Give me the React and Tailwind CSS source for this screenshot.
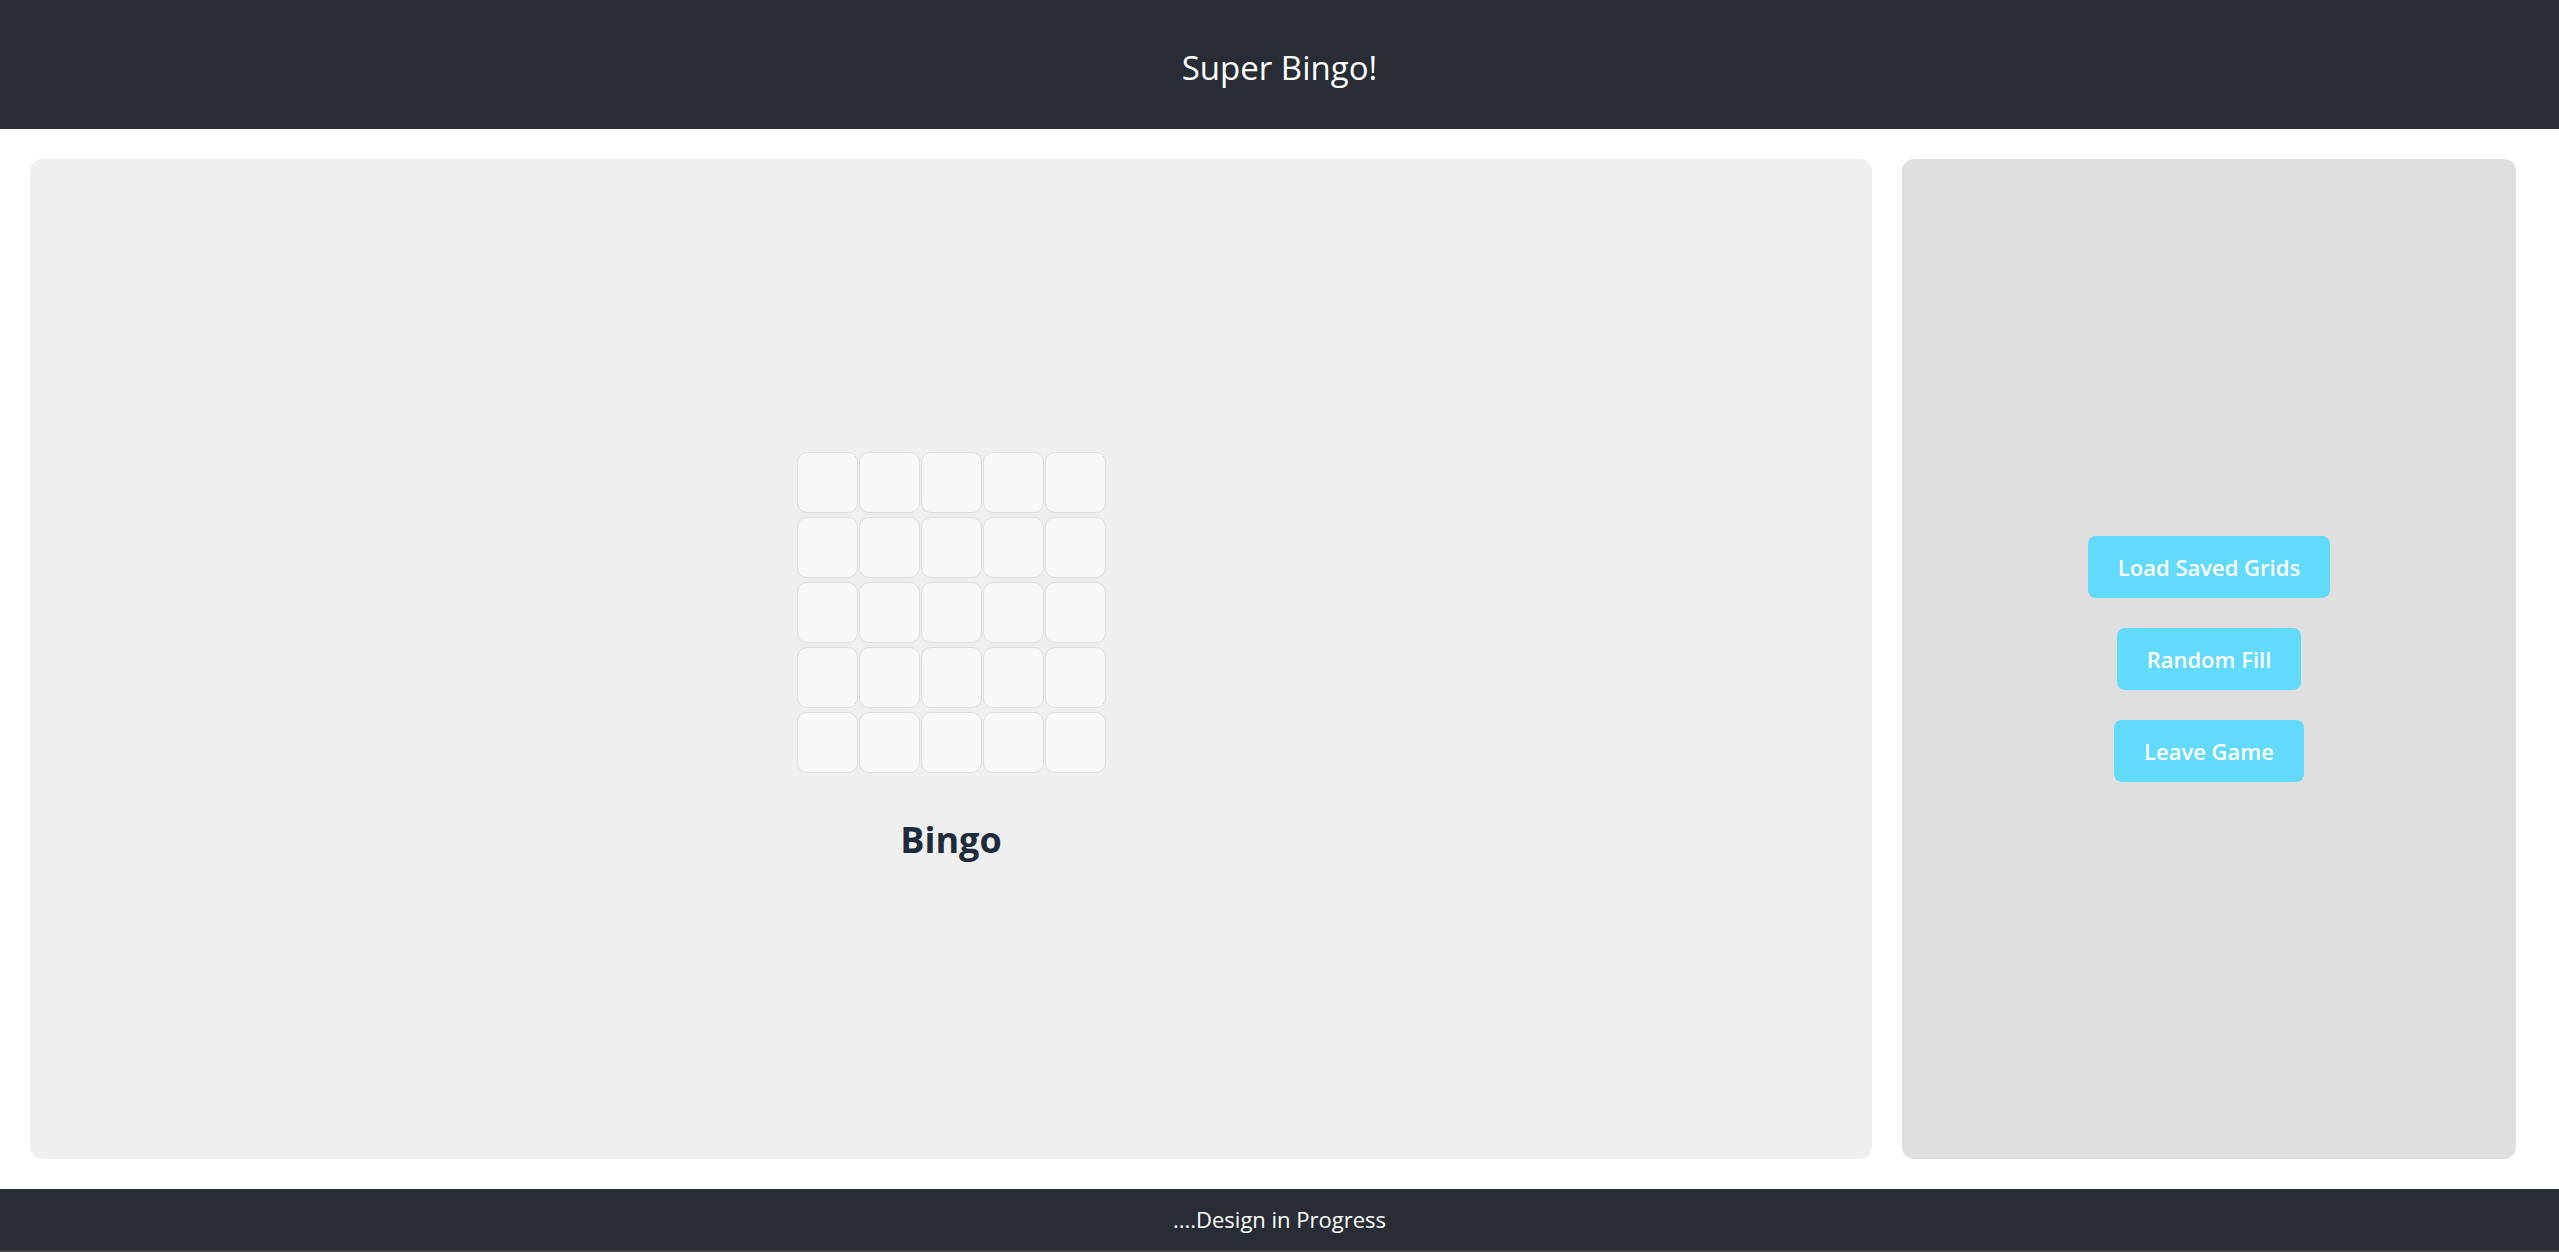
import React from 'react';

const cells = Array.from({ length: 25 }, (_, i) => i);

function BingoGrid() {
  return (
    <div className="grid grid-cols-[repeat(5,61px)] gap-x-[1px] gap-y-[4px]">
      {cells.map((i) => (
        <div
          key={i}
          className="w-[61px] h-[61px] rounded-[10px] border border-[#dddddd] bg-[#f8f8f8]"
        />
      ))}
    </div>
  );
}

function ActionButton({ children }) {
  return (
    <button className="h-[62px] px-[30px] rounded-lg bg-[#61dafb] text-white text-[22px] font-semibold leading-none">
      {children}
    </button>
  );
}

export default function App() {
  return (
    <div className="min-h-screen flex flex-col bg-white font-['Open_Sans',sans-serif]">
      <header className="h-[129px] pt-[6px] bg-[#282c34] flex items-center justify-center">
        <h1 className="text-white text-[33px] font-normal">Super Bingo!</h1>
      </header>

      <main className="grid grid-cols-[3fr_1fr] gap-[30px] pl-[30px] pr-[43px] py-[30px]">
        <section className="h-[1000px] rounded-xl bg-[#efefef] flex flex-col items-center justify-center">
          <BingoGrid />
          <h2 className="mt-[40px] text-[36px] font-bold text-[#1e2b3c]">Bingo</h2>
        </section>

        <aside className="h-[1000px] rounded-xl bg-[#dfdfdf] flex flex-col items-center justify-center gap-[30px]">
          <ActionButton>Load Saved Grids</ActionButton>
          <ActionButton>Random Fill</ActionButton>
          <ActionButton>Leave Game</ActionButton>
        </aside>
      </main>

      <footer className="h-[61px] bg-[#282c34] flex items-center justify-center">
        <p className="text-white text-[22px]">....Design in Progress</p>
      </footer>
      <div className="h-[2px] bg-[#444444]" />
    </div>
  );
}
